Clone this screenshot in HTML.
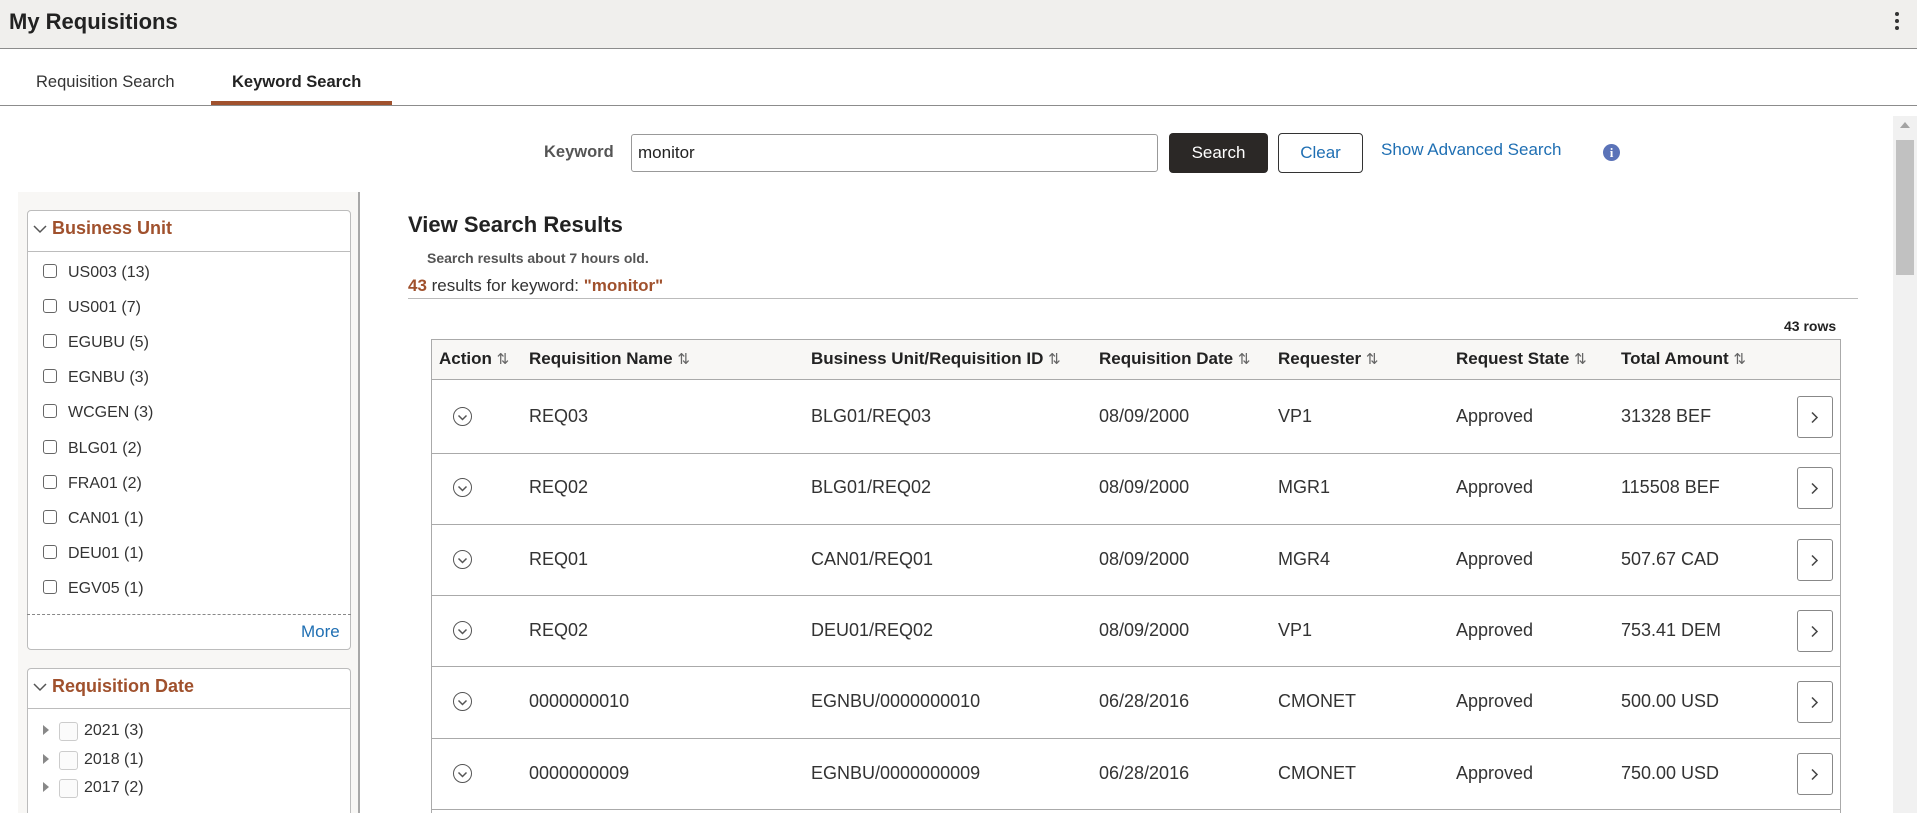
<!DOCTYPE html>
<html><head><meta charset="utf-8"><style>
*{box-sizing:border-box;margin:0;padding:0}
html,body{width:1917px;height:813px;overflow:hidden}
body{font-family:"Liberation Sans",Arial,sans-serif;color:#333;background:#fff}
#w{position:relative;width:1917px;height:813px;overflow:hidden}
.a{position:absolute;white-space:nowrap}
.hdr{left:0;top:0;width:1917px;height:49px;background:#f0efed;border-bottom:1px solid #8c8c8c}
.chk{position:absolute;width:14px;height:14px;border:1.5px solid #666;border-radius:3px;background:#fff}
.item{font-size:16px;color:#333}
.th{font-size:17px;font-weight:bold;color:#222;top:349px}
.td{font-size:18px;color:#333}
.arr{font-weight:normal;color:#666;font-size:15px}
</style></head><body><div id="w">
<div class="a hdr"></div>
<div class="a" style="left:9px;top:9px;font-size:22px;font-weight:bold;color:#222">My Requisitions</div>
<div class="a" style="left:1895px;top:12px;width:4px;height:20px">
<div style="width:4px;height:4px;background:#333;border-radius:2px;margin-bottom:3px"></div><div style="width:4px;height:4px;background:#333;border-radius:2px;margin-bottom:3px"></div><div style="width:4px;height:4px;background:#333;border-radius:2px"></div></div>
<div class="a" style="left:36px;top:73px;font-size:16.5px;color:#333">Requisition Search</div>
<div class="a" style="left:232px;top:73px;font-size:16.5px;font-weight:bold;color:#222">Keyword Search</div>
<div class="a" style="left:211px;top:101px;width:181px;height:4px;background:#a0512d"></div>
<div class="a" style="left:0;top:105px;width:1917px;height:1px;background:#8c8c8c"></div>
<div class="a" style="left:1893px;top:116px;width:24px;height:697px;background:#f1f1f1"></div>
<div class="a" style="left:1900px;top:122px;width:0;height:0;border-left:5px solid transparent;border-right:5px solid transparent;border-bottom:6px solid #a3a3a3"></div>
<div class="a" style="left:1896px;top:140px;width:18px;height:135px;background:#c1c1c1"></div>
<div class="a" style="left:544px;top:143px;font-size:16.5px;font-weight:bold;color:#555">Keyword</div>
<div class="a" style="left:631px;top:134px;width:527px;height:38px;border:1px solid #999;border-radius:3px"></div>
<div class="a" style="left:638px;top:143px;font-size:17px;color:#222">monitor</div>
<div class="a" style="left:1169px;top:133px;width:99px;height:40px;background:#2b2826;border-radius:4px;color:#fff;font-size:17px;text-align:center;line-height:40px">Search</div>
<div class="a" style="left:1278px;top:133px;width:85px;height:40px;border:1px solid #333;border-radius:4px;color:#1f6fb3;font-size:17px;text-align:center;line-height:38px">Clear</div>
<div class="a" style="left:1381px;top:140px;font-size:17px;color:#1f6fb3">Show Advanced Search</div>
<div class="a" style="left:1603px;top:144px;width:17px;height:17px;border-radius:50%;background:#5b73b8;color:#fff;font-size:13px;font-weight:bold;text-align:center;line-height:17px;font-family:'Liberation Serif',serif">i</div>
<div class="a" style="left:18px;top:192px;width:342px;height:621px;background:#f8f7f5;border-right:2px solid #a8a8a8"></div>
<div class="a" style="left:27px;top:210px;width:324px;height:440px;background:#fff;border:1px solid #bcbcbc;border-radius:4px"></div>
<div class="a" style="left:27px;top:251px;width:324px;height:1px;background:#bcbcbc"></div>
<svg class="a" style="left:33px;top:224px" width="14" height="10"><path d="M1 2 L7 8 L13 2" fill="none" stroke="#555" stroke-width="1.5"/></svg>
<div class="a" style="left:52px;top:218px;font-size:18px;font-weight:bold;color:#a0512d">Business Unit</div>
<div id="bu"></div>
<div class="a" style="left:27px;top:614px;width:324px;border-top:1px dashed #888"></div>
<div class="a" style="left:301px;top:622px;font-size:17px;color:#1f6fb3">More</div>
<div class="a" style="left:27px;top:668px;width:324px;height:145px;background:#fff;border:1px solid #bcbcbc;border-bottom:none;border-radius:4px 4px 0 0"></div>
<div class="a" style="left:27px;top:708px;width:324px;height:1px;background:#bcbcbc"></div>
<svg class="a" style="left:33px;top:682px" width="14" height="10"><path d="M1 2 L7 8 L13 2" fill="none" stroke="#555" stroke-width="1.5"/></svg>
<div class="a" style="left:52px;top:676px;font-size:18px;font-weight:bold;color:#a0512d">Requisition Date</div>
<div id="rd"></div>
<div class="a" style="left:408px;top:212px;font-size:22px;font-weight:bold;color:#222">View Search Results</div>
<div class="a" style="left:427px;top:250px;font-size:14px;font-weight:bold;color:#555">Search results about 7 hours old.</div>
<div class="a" style="left:408px;top:276px;font-size:17px;color:#333"><b style="color:#a0512d">43</b> results for keyword: <b style="color:#a0512d">"monitor"</b></div>
<div class="a" style="left:408px;top:298px;width:1450px;height:1px;background:#bbb"></div>
<div class="a" style="left:1784px;top:318px;font-size:14px;font-weight:bold;color:#222">43 rows</div>
<div class="a" style="left:431px;top:339px;width:1410px;height:474px;border:1px solid #aaa;border-bottom:none"></div>
<div class="a" style="left:432px;top:340px;width:1408px;height:40px;background:#f8f7f5;border-bottom:1px solid #aaa"></div>
<div class="a th" style="left:439px">Action <span class="arr">⇅</span></div>
<div class="a th" style="left:529px">Requisition Name <span class="arr">⇅</span></div>
<div class="a th" style="left:811px">Business Unit/Requisition ID <span class="arr">⇅</span></div>
<div class="a th" style="left:1099px">Requisition Date <span class="arr">⇅</span></div>
<div class="a th" style="left:1278px">Requester <span class="arr">⇅</span></div>
<div class="a th" style="left:1456px">Request State <span class="arr">⇅</span></div>
<div class="a th" style="left:1621px">Total Amount <span class="arr">⇅</span></div>
<div id="rows"></div>
</div>
<script>
var bu=["US003 (13)","US001 (7)","EGUBU (5)","EGNBU (3)","WCGEN (3)","BLG01 (2)","FRA01 (2)","CAN01 (1)","DEU01 (1)","EGV05 (1)"],h="";
bu.forEach(function(t,i){var y=273+i*35.1;h+='<div class="chk" style="left:43px;top:'+(y-9)+'px"></div><div class="a item" style="left:68px;top:'+(y-9)+'px">'+t+'</div>';});
document.getElementById('bu').innerHTML=h;h="";
["2021 (3)","2018 (1)","2017 (2)","2016 (11)"].forEach(function(t,i){var y=731+i*28.7;if(y>800)return;h+='<div class="a" style="left:43px;top:'+(y-6)+'px;width:0;height:0;border-top:5px solid transparent;border-bottom:5px solid transparent;border-left:6px solid #888"></div><div class="chk" style="left:59px;top:'+(y-9)+'px;width:19px;height:19px;border:1px solid #ccc;background:#fbfbfb"></div><div class="a item" style="left:84px;top:'+(y-9)+'px">'+t+'</div>';});
document.getElementById('rd').innerHTML=h;h="";
var r=[["REQ03","BLG01/REQ03","08/09/2000","VP1","31328 BEF"],["REQ02","BLG01/REQ02","08/09/2000","MGR1","115508 BEF"],["REQ01","CAN01/REQ01","08/09/2000","MGR4","507.67 CAD"],["REQ02","DEU01/REQ02","08/09/2000","VP1","753.41 DEM"],["0000000010","EGNBU/0000000010","06/28/2016","CMONET","500.00 USD"],["0000000009","EGNBU/0000000009","06/28/2016","CMONET","750.00 USD"]];
r.forEach(function(d,i){var c=417+i*71.3,t=c-11;
h+='<div class="a" style="left:432px;top:'+Math.min(c+35.5,811)+'px;width:1408px;height:1px;background:#aaa"></div>';
h+='<div class="a" style="left:453px;top:'+(c-10)+'px;width:19px;height:19px;border:1.5px solid #555;border-radius:50%"></div><svg class="a" style="left:457px;top:'+(c-3)+'px" width="11" height="7"><path d="M1.5 1.5 L5.5 5.5 L9.5 1.5" fill="none" stroke="#555" stroke-width="1.5"/></svg>';
var xs=[529,811,1099,1278,1621];d.forEach(function(v,j){h+='<div class="a td" style="left:'+xs[j]+'px;top:'+t+'px">'+v+'</div>';});
h+='<div class="a td" style="left:1456px;top:'+t+'px">Approved</div>';
h+='<div class="a" style="left:1797px;top:'+(c-21)+'px;width:36px;height:42px;border:1px solid #888;border-radius:3px"></div><svg class="a" style="left:1810px;top:'+(c-6)+'px" width="9" height="13"><path d="M2 1.5 L7 6.5 L2 11.5" fill="none" stroke="#444" stroke-width="1.5"/></svg>';});
document.getElementById('rows').innerHTML=h;
</script>
</body></html>
